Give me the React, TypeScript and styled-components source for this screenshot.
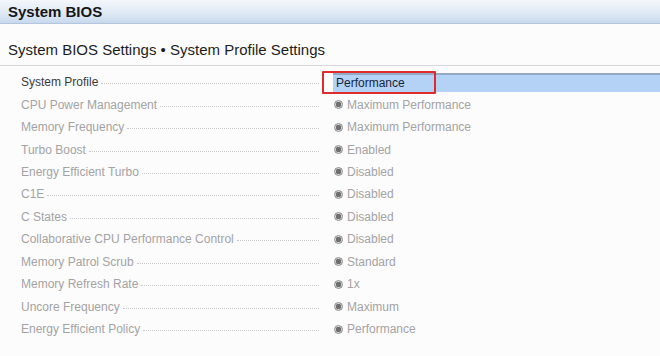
import React from "react";
import styled, { createGlobalStyle, css } from "styled-components";

type Setting = { label: string; value: string; active?: boolean };

const SETTINGS: Setting[] = [
    { label: "System Profile", value: "Performance", active: true },
    { label: "CPU Power Management", value: "Maximum Performance" },
    { label: "Memory Frequency", value: "Maximum Performance" },
    { label: "Turbo Boost", value: "Enabled" },
    { label: "Energy Efficient Turbo", value: "Disabled" },
    { label: "C1E", value: "Disabled" },
    { label: "C States", value: "Disabled" },
    { label: "Collaborative CPU Performance Control", value: "Disabled" },
    { label: "Memory Patrol Scrub", value: "Standard" },
    { label: "Memory Refresh Rate", value: "1x" },
    { label: "Uncore Frequency", value: "Maximum" },
    { label: "Energy Efficient Policy", value: "Performance" },
];

const App = () => {
    return (
        <>
            <GlobalStyle />
            <Page>
                <TitleBar>System BIOS</TitleBar>
                <Heading>System BIOS Settings • System Profile Settings</Heading>
                <List>
                    {SETTINGS.map(item => (
                        <Row key={item.label}>
                            <Label active={item.active}>
                                <LabelText>{item.label}</LabelText>
                                <Leader />
                            </Label>
                            {item.active ? (
                                <SelectCell>
                                    <Highlight>{item.value}</Highlight>
                                    <Callout />
                                </SelectCell>
                            ) : (
                                <Value>
                                    <Radio />
                                    {item.value}
                                </Value>
                            )}
                        </Row>
                    ))}
                </List>
            </Page>
        </>
    );
};

export default App;

const GlobalStyle = createGlobalStyle`
    html, body {
        margin: 0;
        padding: 0;
        background: #fdfcfd;
    }
    body {
        font-family: "Liberation Sans", Arial, sans-serif;
    }
`;

const Page = styled.div`
    width: 660px;
    height: 356px;
    overflow: hidden;
    background: #fdfcfd;
`;

const TitleBar = styled.div`
    height: 24px;
    box-sizing: border-box;
    padding-left: 8px;
    display: flex;
    align-items: center;
    font-size: 15px;
    font-weight: bold;
    color: #161616;
    background: linear-gradient(to bottom, #f4f7fb 0%, #dde8f4 60%, #c8d9ed 100%);
    border-bottom: 1px solid #b3c6dd;
`;

const Heading = styled.div`
    height: 42px;
    box-sizing: border-box;
    padding-left: 8px;
    padding-top: 9px;
    display: flex;
    align-items: center;
    font-size: 15px;
    color: #1c1c1c;
    border-bottom: 1px solid #d6d8dc;
`;

const List = styled.div`
    padding-top: 5px;
    display: flex;
    flex-direction: column;
`;

const Row = styled.div`
    height: 22.45px;
    display: flex;
    align-items: center;
`;

const Label = styled.div<{ active?: boolean }>`
    width: 298px;
    margin-left: 21px;
    display: flex;
    align-items: center;
    font-size: 12px;
    color: #a3a3a3;
    ${props =>
        props.active &&
        css`
            color: #3a3a3a;
        `}
`;

const LabelText = styled.span`
    white-space: nowrap;
`;

const Leader = styled.span`
    flex: 1;
    margin-left: 3px;
    margin-top: 3px;
    border-bottom: 1px dotted #c8c8c8;
`;

const SelectCell = styled.div`
    position: relative;
    flex: 1;
    height: 100%;
    display: flex;
    align-items: center;
    padding-left: 14px;
`;

const Highlight = styled.div`
    flex: 1;
    height: 19px;
    box-sizing: border-box;
    padding-left: 3px;
    display: flex;
    align-items: center;
    font-size: 12px;
    color: #14253a;
    background: #b4d2f6;
    border-top: 2px solid #93a9c4;
`;

const Callout = styled.div`
    position: absolute;
    left: 3px;
    top: 0px;
    width: 114px;
    height: 23px;
    box-sizing: border-box;
    border: 2px solid #df2b2b;
    border-radius: 1px;
`;

const Value = styled.div`
    margin-left: 15px;
    display: flex;
    align-items: center;
    font-size: 12px;
    color: #a3a3a3;
    white-space: nowrap;
`;

const Radio = styled.span`
    width: 9px;
    height: 9px;
    box-sizing: border-box;
    margin-right: 4px;
    border-radius: 50%;
    border: 1px solid #8d8d8d;
    background: radial-gradient(circle, #6f6f6f 0 2.6px, #d6d6d6 3px);
`;
